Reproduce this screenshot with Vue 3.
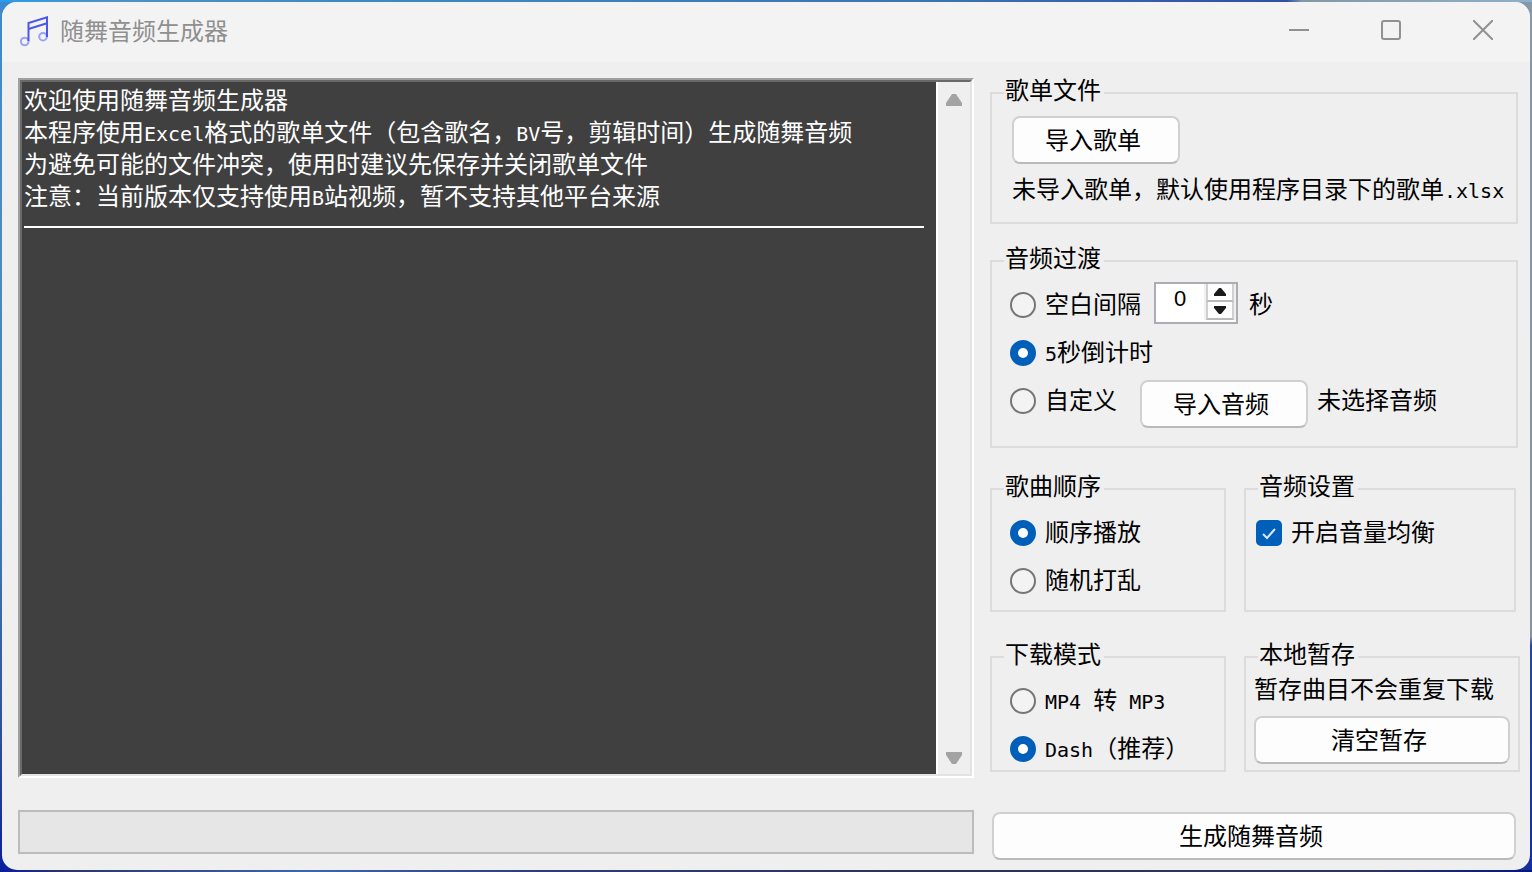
<script setup>
import { ref } from 'vue'

const transition = ref('countdown')
const gap = ref(0)
const order = ref('sequence')
const mode = ref('dash')
const balance = ref(true)
</script>

<template>
  <div class="desktop">
    <main class="window">
      <header class="titlebar">
        <svg class="logo" viewBox="0 0 30 32" aria-hidden="true">
          <g fill="none" stroke="#9aa2f5" stroke-width="2">
            <circle cx="4.700" cy="25.500" r="3.800" />
            <circle cx="23" cy="20.700" r="3.800" />
          </g>
          <g fill="none" stroke="#4b57e8" stroke-width="2">
            <path d="M8.500 25V7L27 1.300V21" />
            <path d="M8.500 13L27 7.300" />
          </g>
        </svg>
        <h1>随舞音频生成器</h1>
        <div class="controls">
          <button type="button" aria-label="最小化">
            <svg viewBox="0 0 20 20"><path d="M0 10H20" /></svg>
          </button>
          <button type="button" aria-label="最大化">
            <svg viewBox="0 0 20 20"><rect x="1" y="1" width="18" height="18" rx="2" /></svg>
          </button>
          <button type="button" aria-label="关闭">
            <svg viewBox="0 0 20 20"><path d="M0 0L20 20M20 0L0 20" /></svg>
          </button>
        </div>
      </header>

      <div class="body">
        <section class="left">
          <div class="log-outer">
            <div class="log-inner">
              <div class="log">
                <p>欢迎使用随舞音频生成器</p>
                <p>本程序使用<span class="latin">Excel</span>格式的歌单文件（包含歌名，<span class="latin">BV</span>号，剪辑时间）生成随舞音频</p>
                <p>为避免可能的文件冲突，使用时建议先保存并关闭歌单文件</p>
                <p>注意：当前版本仅支持使用<span class="latin">B</span>站视频，暂不支持其他平台来源</p>
                <hr />
              </div>
              <div class="scrollbar">
                <svg viewBox="0 0 16 12"><path d="M0 12V9L6 0H10L16 9V12Z" /></svg>
                <svg viewBox="0 0 16 12"><path d="M0 0V3L6 12H10L16 3V0Z" /></svg>
              </div>
            </div>
          </div>
          <div class="progress" role="progressbar" aria-label="进度" aria-valuenow="0"></div>
        </section>

        <section class="right">
          <fieldset class="file">
            <legend>歌单文件</legend>
            <button type="button" class="btn">导入歌单</button>
            <p>未导入歌单，默认使用程序目录下的歌单<span class="latin">.xlsx</span></p>
          </fieldset>

          <fieldset class="transition">
            <legend>音频过渡</legend>
            <div class="row">
              <label><input v-model="transition" type="radio" name="transition" value="blank" />空白间隔</label>
              <span class="spinner">
                <input v-model="gap" type="number" min="0" aria-label="间隔秒数" />
                <span class="steps">
                  <button type="button" aria-label="增加" @click="gap++">
                    <svg viewBox="0 0 12 8"><path d="M0 8V6L5 0H7L12 6V8Z" /></svg>
                  </button>
                  <button type="button" aria-label="减少" @click="gap--">
                    <svg viewBox="0 0 12 8"><path d="M0 0V2L5 8H7L12 2V0Z" /></svg>
                  </button>
                </span>
              </span>
              <span class="unit">秒</span>
            </div>
            <div class="row">
              <label><input v-model="transition" type="radio" name="transition" value="countdown" /><span><span class="digit">5</span>秒倒计时</span></label>
            </div>
            <div class="row custom">
              <label><input v-model="transition" type="radio" name="transition" value="custom" />自定义</label>
              <button type="button" class="btn">导入音频</button>
              <span class="status">未选择音频</span>
            </div>
          </fieldset>

          <div class="pair">
            <fieldset class="options">
              <legend>歌曲顺序</legend>
              <label><input v-model="order" type="radio" name="order" value="sequence" />顺序播放</label>
              <label><input v-model="order" type="radio" name="order" value="random" />随机打乱</label>
            </fieldset>
            <fieldset class="options settings">
              <legend>音频设置</legend>
              <label class="check">
                <input v-model="balance" type="checkbox" />
                <svg v-if="balance" viewBox="0 0 26 26" aria-hidden="true"><path d="M7 14L11 18L19 9" /></svg>
                开启音量均衡
              </label>
            </fieldset>
          </div>

          <div class="pair last">
            <fieldset class="options compact">
              <legend>下载模式</legend>
              <label><input v-model="mode" type="radio" name="mode" value="mp4" /><span><span class="latin">MP4&nbsp;</span>转<span class="latin">&nbsp;MP3</span></span></label>
              <label><input v-model="mode" type="radio" name="mode" value="dash" /><span><span class="latin">Dash</span>（推荐）</span></label>
            </fieldset>
            <fieldset class="cache">
              <legend>本地暂存</legend>
              <p>暂存曲目不会重复下载</p>
              <button type="button" class="btn">清空暂存</button>
            </fieldset>
          </div>

          <button type="button" class="btn generate">生成随舞音频</button>
        </section>
      </div>
    </main>
  </div>
</template>

<style>
html,
body {
  margin: 0;
}
</style>

<style scoped>
* {
  box-sizing: border-box;
}

.desktop {
  display: flex;
  min-height: 100vh;
  padding: 2px;
  background:
    linear-gradient(90deg, #2a9bf0, #4a93c8 6%, #3c86c0 30%, #3b74b8 60%, #2e50a4 84%, #8398a8 85%, #8fb0c8) top / 100% 2px no-repeat,
    linear-gradient(90deg, #0a1e9c, #2c3466 4%, #3a68ac 20%, #2f3c78 35%, #2c3358 60%, #2c3560 90%, #06167c) bottom / 100% 2px no-repeat,
    linear-gradient(180deg, #3b8ad0, #4f8cbc 30%, #3f7cb4 60%, #2f4f98 85%, #0a1e9c) left / 50% 100% no-repeat,
    linear-gradient(180deg, #8398a8, #8395a2 73%, #24489c 74%, #12309c) right / 50% 100% no-repeat;
  font-family: "Liberation Sans", "Noto Sans CJK SC", sans-serif;
  font-size: 24px;
  line-height: 24px;
  color: #000;
}

.window {
  flex: 1;
  display: flex;
  flex-direction: column;
  min-width: 0;
  border-radius: 15px;
  background: #efefef;
  overflow: hidden;
}

.titlebar {
  display: flex;
  align-items: center;
  height: 60px;
  padding-left: 18px;
  background: #f3f3f3;
}

.logo {
  width: 30px;
  height: 32px;
}

h1 {
  flex: 1;
  margin: 0 0 0 10px;
  font-size: 24px;
  font-weight: 400;
  color: #8f8f8f;
}

.controls {
  display: flex;
  margin: 0 1px 4px 0;
}

.controls button {
  display: grid;
  place-items: center;
  width: 92px;
  height: 56px;
  padding: 0;
  border: 0;
  background: none;
}

.controls svg {
  width: 20px;
  height: 20px;
  fill: none;
  stroke: #919191;
  stroke-width: 2;
}

.body {
  flex: 1;
  display: flex;
  gap: 16px;
  padding: 16px 10px 10px 16px;
}

p {
  margin: 0;
  white-space: nowrap;
}

.latin {
  font-family: "DejaVu Sans Mono", monospace;
  font-size: 20px;
  line-height: 20px;
}

.digit {
  font-family: "DejaVu Sans Mono", monospace;
  font-size: 20px;
  line-height: 20px;
}

.left {
  flex: 1;
  display: flex;
  flex-direction: column;
  gap: 32px;
  min-width: 0;
  padding-bottom: 6px;
}

.log-outer {
  flex: 1;
  display: flex;
  border: 2px solid;
  border-color: #a0a0a0 #fff #fff #a0a0a0;
}

.log-inner {
  flex: 1;
  display: flex;
  min-width: 0;
  border: 2px solid;
  border-color: #696969 #e3e3e3 #e3e3e3 #696969;
}

.log {
  flex: 1;
  min-width: 0;
  padding: 3px 12px 0 2px;
  overflow: hidden;
  background: #404040;
  color: #fff;
  line-height: 32px;
}

hr {
  height: 2px;
  margin: 13px 0 0;
  border: 0;
  background: #fff;
}

.scrollbar {
  display: flex;
  flex-direction: column;
  justify-content: space-between;
  align-items: center;
  width: 34px;
  padding: 12px 0 10px;
  border-left: 2px solid #fff;
}

.scrollbar svg {
  width: 16px;
  height: 12px;
  fill: #a3a3a3;
}

.progress {
  height: 44px;
  border: 2px solid #bcbcbc;
  background: #e6e6e6;
}

.right {
  width: 530px;
}

fieldset {
  --indent: 18px;
  min-width: 0;
  margin: 0 2px 0 0;
  padding: 0 0 0 var(--indent);
  border: 2px solid #dcdcdc;
}

legend {
  margin-left: calc(12px - var(--indent));
  padding: 1px 3px 5px 1px;
}

.btn {
  display: block;
  width: 168px;
  height: 48px;
  padding: 2px 6px 0 0;
  border: 2px solid #d0d0d0;
  border-bottom-color: #bababa;
  border-radius: 8px;
  background: #fdfdfd;
  color: #000;
  font: inherit;
  line-height: 24px;
}

.file {
  --indent: 20px;
  padding-top: 8px;
  padding-bottom: 20px;
}

.file p {
  margin-top: 14px;
}

.transition {
  margin-top: 22px;
  padding-top: 5px;
  padding-bottom: 18px;
}

.row {
  display: flex;
  height: 48px;
  line-height: 48px;
}

label {
  display: flex;
  align-items: center;
  gap: 9px;
  white-space: nowrap;
}

input[type="radio"],
input[type="checkbox"] {
  flex: none;
  appearance: none;
  width: 26px;
  height: 26px;
  margin: 0;
  border: 2px solid #767676;
  border-radius: 50%;
  background: #f3f3f3;
}

input[type="radio"]:checked {
  border: 8px solid #005fb8;
  background: #fff;
}

input[type="checkbox"] {
  border-radius: 5px;
}

input[type="checkbox"]:checked {
  border-color: #005fb8;
  background: #005fb8;
}

.spinner {
  display: flex;
  width: 84px;
  height: 42px;
  margin: 1px 11px 0 13px;
  border: 2px solid #abadb3;
  background: #fff;
}

.spinner input {
  appearance: textfield;
  flex: 1;
  width: 0;
  padding: 0 0 8px;
  border: 0;
  outline: 0;
  background: none;
  font-family: "Liberation Sans", sans-serif;
  font-size: 22px;
  text-align: center;
  color: #000;
}

.spinner input::-webkit-inner-spin-button {
  display: none;
}

.steps {
  display: flex;
  flex-direction: column;
  width: 32px;
  height: 36px;
  padding: 0 2px;
  background: #f0f0f0;
}

.steps button {
  flex: 1;
  display: grid;
  place-items: center;
  padding: 0;
  border: 2px solid #d0d0d0;
  border-top: 0;
  border-bottom-color: #bababa;
  background: #fdfdfd;
}

.steps svg {
  width: 12px;
  height: 8px;
  fill: #1a1a1a;
}

.custom {
  height: 51px;
}

.custom label {
  height: 48px;
}

.custom .btn {
  align-self: flex-end;
  margin: 0 9px 0 23px;
}

.pair {
  display: grid;
  grid-template-columns: 236px 1fr;
  gap: 18px;
  margin-top: 26px;
}

.pair.last {
  margin-top: 30px;
}

.pair fieldset {
  margin-right: 0;
}

.options {
  padding-top: 16px;
  padding-bottom: 16px;
}

.options label {
  height: 26px;
}

.options label + label {
  margin-top: 22px;
}

.compact {
  padding-bottom: 8px;
}

.pair .settings {
  --indent: 10px;
  margin-right: 4px;
}

.check {
  position: relative;
}

.check svg {
  position: absolute;
  left: 0;
  width: 26px;
  height: 26px;
  fill: none;
  stroke: #d6e8f8;
  stroke-width: 2;
  pointer-events: none;
}

.cache {
  --indent: 8px;
  padding-top: 6px;
  padding-right: 8px;
  padding-bottom: 6px;
}

.cache .btn {
  width: 100%;
  margin-top: 14px;
}

.generate {
  width: calc(100% - 6px);
  margin: 40px 0 0 2px;
}
</style>
